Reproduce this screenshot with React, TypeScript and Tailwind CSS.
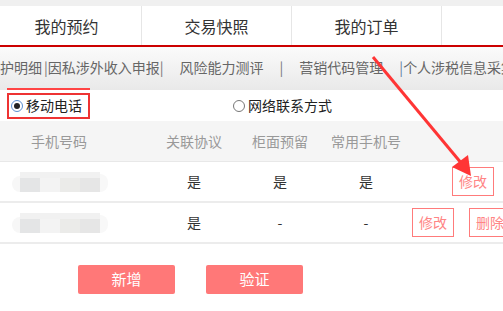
import React from 'react';

const font = { fontFamily: '"Microsoft YaHei", "Noto Sans CJK SC", "Noto Sans", sans-serif' };

function Blurred() {
  return (
    <div className="ml-[12px] flex items-end">
      <div className="w-[8px] h-[16px] rounded-l-full bg-[#f7f7f7]" />
      <div className="flex flex-col w-[80px]">
        <div className="h-[6px] bg-[#f1f1f1]" />
        <div className="flex h-[14px]">
          <div className="w-[20px] bg-[#e4e5e6]" />
          <div className="w-[20px] bg-[#f3f3f3]" />
          <div className="w-[20px] bg-[#ebebe9]" />
          <div className="w-[20px] bg-[#e6e6e6]" />
        </div>
      </div>
      <div className="w-[8px] h-[18px] rounded-r-full bg-[#f8f8f8]" />
    </div>
  );
}

function SmallBtn({ label }: { label: string }) {
  return (
    <div className="w-[42px] h-[29px] shrink-0 border border-[#ff7b7b] text-[#ff8585] text-[14px] flex items-center justify-center">
      {label}
    </div>
  );
}

export default function App() {
  const tabs = ['我的预约', '交易快照', '我的订单', ''];
  const rows = [
    { a: '是', b: '是', c: '是', actions: ['修改'] },
    { a: '是', b: '-', c: '-', actions: ['修改', '删除'] },
  ];

  return (
    <div className="relative w-[503px] h-[311px] overflow-hidden bg-white" style={font}>
      <div className="h-[6px] bg-[#f0f0f0]" />

      {/* tabs */}
      <div className="flex h-[41px] border-b-2 border-[#cc0000] -ml-[8px] overflow-visible">
        {tabs.map((t, i) => (
          <div
            key={i}
            className="w-[150px] shrink-0 border-r border-[#e6e6e6] flex items-center justify-center text-[16px] text-[#333]"
          >
            {t}
          </div>
        ))}
      </div>

      {/* sub nav */}
      <div className="bg-gradient-to-b from-[#fbfbfb] to-[#e9e9e9]">
        <div className="h-[41px] flex items-center whitespace-nowrap text-[14px] text-[#666]">
          <span>护明细</span>
          <span className="ml-[2px] text-[#777]">|</span>
          <span>因私涉外收入申报</span>
          <span className="text-[#777]">|</span>
          <span className="ml-[16px]">风险能力测评</span>
          <span className="ml-[16px] text-[#777]">|</span>
          <span className="ml-[16px]">营销代码管理</span>
          <span className="ml-[16px] text-[#5a7aa0]">|</span>
          <span>个人涉税信息采集</span>
        </div>
        <div className="h-[2px] flex">
          <div className="ml-[7px] w-[83px] bg-[#ff4444]" />
        </div>
      </div>

      {/* radios */}
      <div className="h-[31px] flex items-center text-[14px] text-[#222]">
        <div className="ml-[7px] w-[83px] h-[26px] border-2 border-[#ee3333] flex items-center pl-[2px]">
          <span className="w-[12px] h-[12px] rounded-full border border-[#5a8fd0] bg-white flex items-center justify-center">
            <span className="w-[6px] h-[6px] rounded-full bg-[#222]" />
          </span>
          <span className="ml-[3px]">移动电话</span>
        </div>
        <div className="ml-[143px] flex items-center">
          <span className="w-[12px] h-[12px] rounded-full border border-[#777] bg-white" />
          <span className="ml-[3px]">网络联系方式</span>
        </div>
      </div>

      {/* table header */}
      <div className="grid grid-cols-[151px_86px_86px_86px_1fr] h-[41px] items-center bg-[#f5f5f5] text-[14px] text-[#999] border-b border-[#e8e8e8]">
        <div className="pl-[31px]">手机号码</div>
        <div className="text-center">关联协议</div>
        <div className="text-center">柜面预留</div>
        <div className="text-center">常用手机号</div>
        <div />
      </div>

      {rows.map((r, i) => (
        <div
          key={i}
          className="grid grid-cols-[151px_86px_86px_86px_1fr] h-[41px] items-center text-[14px] text-[#333] border-b-2 border-[#ececec]"
        >
          <Blurred />
          <div className="text-center">{r.a}</div>
          <div className="text-center">{r.b}</div>
          <div className="text-center">{r.c}</div>
          <div className="flex gap-[15px] overflow-hidden whitespace-nowrap">
            {r.actions.length === 1 ? (
              <div className="ml-[43px]">
                <SmallBtn label={r.actions[0]} />
              </div>
            ) : (
              <>
                <div className="ml-[3px]">
                  <SmallBtn label={r.actions[0]} />
                </div>
                <SmallBtn label={r.actions[1]} />
              </>
            )}
          </div>
        </div>
      ))}

      {/* bottom buttons */}
      <div className="flex gap-[31px] pl-[78px] pt-[21px]">
        <button className="w-[97px] h-[29px] rounded-[2px] bg-[#ff7878] text-white text-[15px]">新增</button>
        <button className="w-[97px] h-[29px] rounded-[2px] bg-[#ff7878] text-white text-[15px]">验证</button>
      </div>

      {/* annotation arrow */}
      <svg className="absolute left-0 top-0 pointer-events-none" width="503" height="311" viewBox="0 0 503 311">
        <line x1="373" y1="57" x2="462" y2="164" stroke="#ff3535" strokeWidth="3" />
        <polygon points="471,176 468,155 452,167" fill="#ff3535" />
      </svg>
    </div>
  );
}
